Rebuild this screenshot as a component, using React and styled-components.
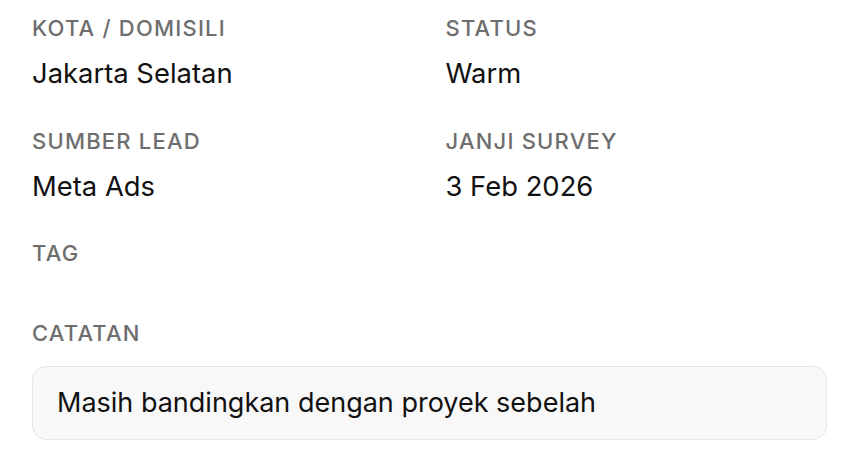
import React from "react";
import styled, { createGlobalStyle } from "styled-components";

const Global = createGlobalStyle`
  html, body { margin: 0; padding: 0; background: #ffffff; }
  body { font-family: Inter, "Noto Sans", sans-serif; -webkit-font-smoothing: antialiased; }
`;

const Page = styled.div`
  padding: 15px 32px 0 32px;
  display: flex;
  flex-direction: column;
`;

const Grid = styled.div`
  display: grid;
  grid-template-columns: 1fr 1fr;
  column-gap: 32px;
  row-gap: 39px;
`;

const Field = styled.div`
  display: flex;
  flex-direction: column;
  gap: 16px;
`;

const Label = styled.div`
  font-size: 22px;
  line-height: 26px;
  font-weight: 500;
  color: #6e6e6e;
  letter-spacing: 1.2px;
`;

const Value = styled.div`
  font-size: 27.4px;
  line-height: 32px;
  font-weight: 400;
  color: #111111;
`;

const Section = styled.div`
  display: flex;
  flex-direction: column;
  gap: ${(p) => p.$gap || 0}px;
  margin-top: ${(p) => p.$top || 0}px;
`;

const NoteBox = styled.div`
  border: 1px solid #e6e6e6;
  background: #f8f8f8;
  border-radius: 14px;
  padding: 20px 24px;
  font-size: 27px;
  line-height: 32px;
  color: #111111;
`;

export default function App() {
  return (
    <>
      <Global />
      <Page>
        <Grid>
          <Field>
            <Label>KOTA / DOMISILI</Label>
            <Value>Jakarta Selatan</Value>
          </Field>
          <Field>
            <Label>STATUS</Label>
            <Value>Warm</Value>
          </Field>
          <Field>
            <Label>SUMBER LEAD</Label>
            <Value>Meta Ads</Value>
          </Field>
          <Field>
            <Label>JANJI SURVEY</Label>
            <Value>3 Feb 2026</Value>
          </Field>
        </Grid>
        <Section $top={38}>
          <Label>TAG</Label>
        </Section>
        <Section $top={54} $gap={20}>
          <Label>CATATAN</Label>
          <NoteBox>Masih bandingkan dengan proyek sebelah</NoteBox>
        </Section>
      </Page>
    </>
  );
}
